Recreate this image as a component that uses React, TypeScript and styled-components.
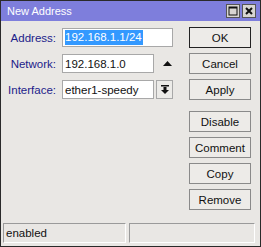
import React from "react";
import styled, { createGlobalStyle } from "styled-components";

const Global = createGlobalStyle`
  html, body { margin: 0; padding: 0; background: #e9e7e4; }
  body { font-family: "Liberation Sans", Arial, sans-serif; font-size: 11.5px; }
`;

const Window = styled.div`
  width: 261px;
  height: 247px;
  box-sizing: border-box;
  border: 1px solid #2a2a2a;
  background: #e9e7e4;
  display: flex;
  flex-direction: column;
`;

const TitleBar = styled.div`
  height: 20px;
  background: #7e7edc;
  display: flex;
  align-items: center;
  justify-content: space-between;
  padding: 0 4px 0 6px;
  color: #fff;
  font-size: 11px;
`;

const TitleButtons = styled.div`
  display: flex;
  gap: 2px;
`;

const TitleButton = styled.div`
  width: 14px;
  height: 14px;
  box-sizing: border-box;
  background: #d8d6d2;
  border: 1px solid #555;
  display: flex;
  align-items: center;
  justify-content: center;
`;

const Body = styled.div`
  flex: 1;
  display: flex;
  justify-content: space-between;
  padding: 6px 9px 0 0;
`;

const Form = styled.div`
  display: flex;
  flex-direction: column;
  gap: 7px;
  padding-top: 1px;
`;

const Row = styled.div`
  display: flex;
  align-items: center;
  height: 19px;
`;

const Label = styled.div`
  width: 55px;
  text-align: right;
  color: #1c1c8a;
  margin-right: 6px;
`;

const Field = styled.div<{ $w: number }>`
  width: ${(p) => p.$w}px;
  height: 19px;
  box-sizing: border-box;
  background: #fff;
  border: 1px solid #a8a8a8;
  display: flex;
  align-items: center;
  padding-left: 2px;
  color: #111;
`;

const Selected = styled.span`
  background: #3399ff;
  color: #fff;
  line-height: 15px;
  padding-right: 1px;
`;

const Arrow = styled.div`
  margin-left: 6px;
  width: 14px;
  display: flex;
  justify-content: center;
`;

const DropButton = styled.div`
  margin-left: 2px;
  width: 17px;
  height: 19px;
  box-sizing: border-box;
  border: 1px solid #a8a8a8;
  background: #ecebe8;
  display: flex;
  align-items: center;
  justify-content: center;
`;

const Buttons = styled.div`
  display: flex;
  flex-direction: column;
  gap: 5px;
`;

const Button = styled.div<{ $default?: boolean; $gapTop?: boolean }>`
  width: 62px;
  height: 21px;
  box-sizing: border-box;
  border: 1px solid ${(p) => (p.$default ? "#222" : "#8a8a8a")};
  background: #edebe8;
  display: flex;
  align-items: center;
  justify-content: center;
  color: #111;
  margin-top: ${(p) => (p.$gapTop ? "6px" : "0")};
`;

const StatusBar = styled.div`
  display: flex;
  gap: 3px;
  padding: 0 4px 3px 2px;
`;

const StatusCell = styled.div<{ $w: number }>`
  width: ${(p) => p.$w}px;
  height: 20px;
  box-sizing: border-box;
  border-top: 1px solid #9a9a9a;
  border-left: 1px solid #9a9a9a;
  border-right: 1px solid #fff;
  border-bottom: 1px solid #fff;
  display: flex;
  align-items: center;
  padding-left: 2px;
  color: #111;
`;

export default function App() {
  return (
    <>
      <Global />
      <Window>
        <TitleBar>
          <span>New Address</span>
          <TitleButtons>
            <TitleButton>
              <svg width="10" height="10" viewBox="0 0 10 10">
                <rect x="1" y="1" width="8" height="8" fill="none" stroke="#111" strokeWidth="1" />
                <rect x="1" y="1" width="8" height="1.5" fill="#111" />
              </svg>
            </TitleButton>
            <TitleButton>
              <svg width="10" height="10" viewBox="0 0 10 10">
                <path d="M2 2 L8 8 M8 2 L2 8" stroke="#111" strokeWidth="2" />
              </svg>
            </TitleButton>
          </TitleButtons>
        </TitleBar>
        <Body>
          <Form>
            <Row>
              <Label>Address:</Label>
              <Field $w={111}>
                <Selected>192.168.1.1/24</Selected>
              </Field>
            </Row>
            <Row>
              <Label>Network:</Label>
              <Field $w={92}>192.168.1.0</Field>
              <Arrow>
                <svg width="9" height="5" viewBox="0 0 9 5">
                  <path d="M0 5 L4.5 0 L9 5 Z" fill="#111" />
                </svg>
              </Arrow>
            </Row>
            <Row>
              <Label>Interface:</Label>
              <Field $w={92}>ether1-speedy</Field>
              <DropButton>
                <svg width="8" height="9" viewBox="0 0 8 9">
                  <rect x="0" y="0" width="8" height="1.5" fill="#111" />
                  <path d="M2.5 2 H5.5 V5 H8 L4 9 L0 5 H2.5 Z" fill="#111" />
                </svg>
              </DropButton>
            </Row>
          </Form>
          <Buttons>
            <Button $default>OK</Button>
            <Button>Cancel</Button>
            <Button>Apply</Button>
            <Button $gapTop>Disable</Button>
            <Button>Comment</Button>
            <Button>Copy</Button>
            <Button>Remove</Button>
          </Buttons>
        </Body>
        <StatusBar>
          <StatusCell $w={123}>enabled</StatusCell>
          <StatusCell $w={126} />
        </StatusBar>
      </Window>
    </>
  );
}
